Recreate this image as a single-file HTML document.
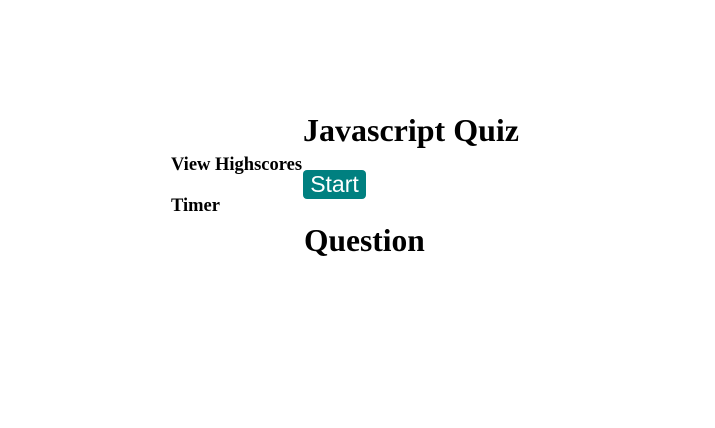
<!DOCTYPE html>
<html><head><style>
body{margin:0;width:715px;height:428px;background:#fff;font-family:"Liberation Serif",serif;position:relative;overflow:hidden}
.a{position:absolute;white-space:nowrap;font-weight:bold;color:#000;line-height:1}
</style></head><body>
<div class="a" style="left:303px;top:114px;font-size:32px">Javascript Quiz</div>
<div class="a" style="left:171px;top:156px;font-size:18.5px">View Highscores</div>
<div class="a" style="left:171px;top:197px;font-size:18.5px">Timer</div>
<div style="position:absolute;left:303px;top:170px;width:63px;height:29px;background:#008080;border-radius:4px;color:#fff;font-family:'Liberation Sans',sans-serif;font-size:23px;line-height:29px;text-align:center">Start</div>
<div class="a" style="left:304px;top:225px;font-size:31.5px">Question</div>
</body></html>
